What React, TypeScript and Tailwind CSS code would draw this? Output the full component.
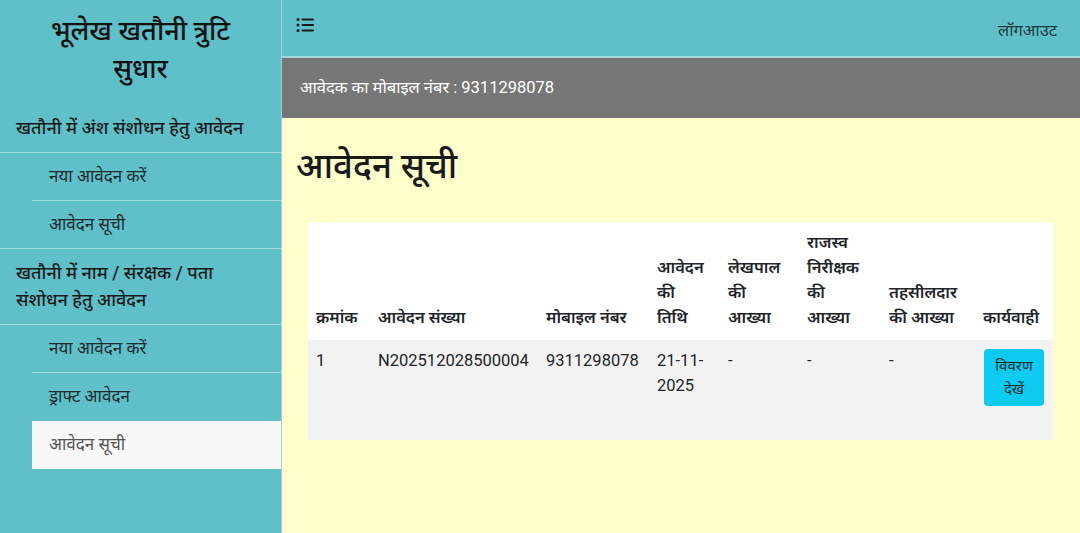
import React from "react";

const FONT = { fontFamily: 'Roboto, "Noto Sans", "Noto Sans Devanagari", sans-serif' };

const headers = [
  { w: 62, lines: ["क्रमांक"] },
  { w: 168, lines: ["आवेदन संख्या"] },
  { w: 111, lines: ["मोबाइल नंबर"] },
  { w: 71, lines: ["आवेदन", "की", "तिथि"] },
  { w: 79, lines: ["लेखपाल", "की", "आख्या"] },
  { w: 82, lines: ["राजस्व", "निरीक्षक", "की", "आख्या"] },
  { w: 94, lines: ["तहसीलदार", "की आख्या"] },
  { w: 78, lines: ["कार्यवाही"] },
];

function SubItem({ label, line = true, active = false }: { label: string; line?: boolean; active?: boolean }) {
  return (
    <div
      className={`ml-[32px] h-[48px] flex items-center pl-[17px] text-[17px] ${
        active ? "bg-[#f8f8f8] text-[#555]" : "text-[#1e2a2c]"
      } ${line ? "border-b border-[#a7dde3]" : ""}`}
    >
      {label}
    </div>
  );
}

export default function App() {
  return (
    <div className="flex w-[1080px] h-[533px] overflow-hidden" style={FONT}>
      {/* Sidebar */}
      <aside className="w-[282px] shrink-0 bg-[#5fc0ca] border-r border-[#9fd3d9]">
        <div className="pt-[12px] pb-[25px] text-center text-[27px] leading-[38px] font-medium text-[#111]">
          भूलेख खतौनी त्रुटि
          <br />
          सुधार
        </div>
        <div className="px-[16px] pb-[11px] pt-[1px] text-[18px] leading-[27px] font-medium text-[#1a1a1a] border-b border-[#a7dde3]">
          खतौनी में अंश संशोधन हेतु आवेदन
        </div>
        <SubItem label="नया आवेदन करें" />
        <div className="h-[48px] flex items-center pl-[49px] text-[17px] text-[#1e2a2c] border-b border-[#a7dde3]">
          आवेदन सूची
        </div>
        <div className="px-[16px] pt-[10px] pb-[11px] text-[18px] leading-[27px] font-medium text-[#1a1a1a] border-b border-[#a7dde3]">
          खतौनी में नाम / संरक्षक / पता
          <br />
          संशोधन हेतु आवेदन
        </div>
        <SubItem label="नया आवेदन करें" />
        <SubItem label="ड्राफ्ट आवेदन" line={false} />
        <SubItem label="आवेदन सूची" line={false} active />
      </aside>

      {/* Main */}
      <main className="flex-1 flex flex-col bg-[#ffffcc]">
        <div className="h-[58px] shrink-0 bg-[#5fc0ca] border-b-2 border-[#a9d6db] flex items-start justify-between pl-[14px] pr-[23px]">
          <svg width="19" height="16" viewBox="0 0 19 16" className="mt-[17px]" fill="#1a1a1a">
            <rect x="0.5" y="1" width="3" height="3" rx="1.5" />
            <rect x="0.5" y="6.5" width="3" height="3" rx="1.5" />
            <rect x="0.5" y="12" width="3" height="3" rx="1.5" />
            <rect x="5.5" y="1.5" width="12.5" height="2" rx="1" />
            <rect x="5.5" y="7" width="12.5" height="2" rx="1" />
            <rect x="5.5" y="12.5" width="12.5" height="2" rx="1" />
          </svg>
          <span className="mt-[19px] text-[16.5px] leading-[24px] text-[#1f3a3d]">लॉगआउट</span>
        </div>
        <div className="h-[60px] shrink-0 bg-[#777777] flex items-center pl-[18px] text-[16.5px] text-white">
          आवेदक का मोबाइल नंबर : 9311298078
        </div>
        <div className="pl-[14px] pr-[27px]">
          <h1 className="mt-[28px] text-[35px] leading-[42px] font-medium text-[#1a1a1a]">आवेदन सूची</h1>
          <table
            className="mt-[34px] ml-[12px] table-fixed border-collapse bg-white text-[16.5px] leading-[25px] text-[#212529]"
            style={{ width: 745 }}
          >
            <colgroup>
              {headers.map((h, i) => (
                <col key={i} style={{ width: h.w }} />
              ))}
            </colgroup>
            <thead>
              <tr>
                {headers.map((h, i) => (
                  <th key={i} className="align-bottom text-left font-semibold px-[8px] pt-[8px] pb-[10px]">
                    {h.lines.map((l, j) => (
                      <div key={j} className="whitespace-nowrap">{l}</div>
                    ))}
                  </th>
                ))}
              </tr>
            </thead>
            <tbody>
              <tr className="bg-[#f2f2f2] h-[100px]">
                <td className="align-top px-[8px] pt-[8px]">1</td>
                <td className="align-top px-[8px] pt-[8px]">N202512028500004</td>
                <td className="align-top px-[8px] pt-[8px]">9311298078</td>
                <td className="align-top px-[8px] pt-[8px]">
                  21-11-
                  <br />
                  2025
                </td>
                <td className="align-top px-[8px] pt-[8px]">-</td>
                <td className="align-top px-[8px] pt-[8px]">-</td>
                <td className="align-top px-[8px] pt-[8px]">-</td>
                <td className="align-top pl-[9px] pt-[9px]">
                  <button className="w-[60px] h-[57px] rounded-[4px] bg-[#0dcaf0] text-[15px] leading-[23px] text-[#1a2e33]">
                    विवरण
                    <br />
                    देखें
                  </button>
                </td>
              </tr>
            </tbody>
          </table>
        </div>
      </main>
    </div>
  );
}
